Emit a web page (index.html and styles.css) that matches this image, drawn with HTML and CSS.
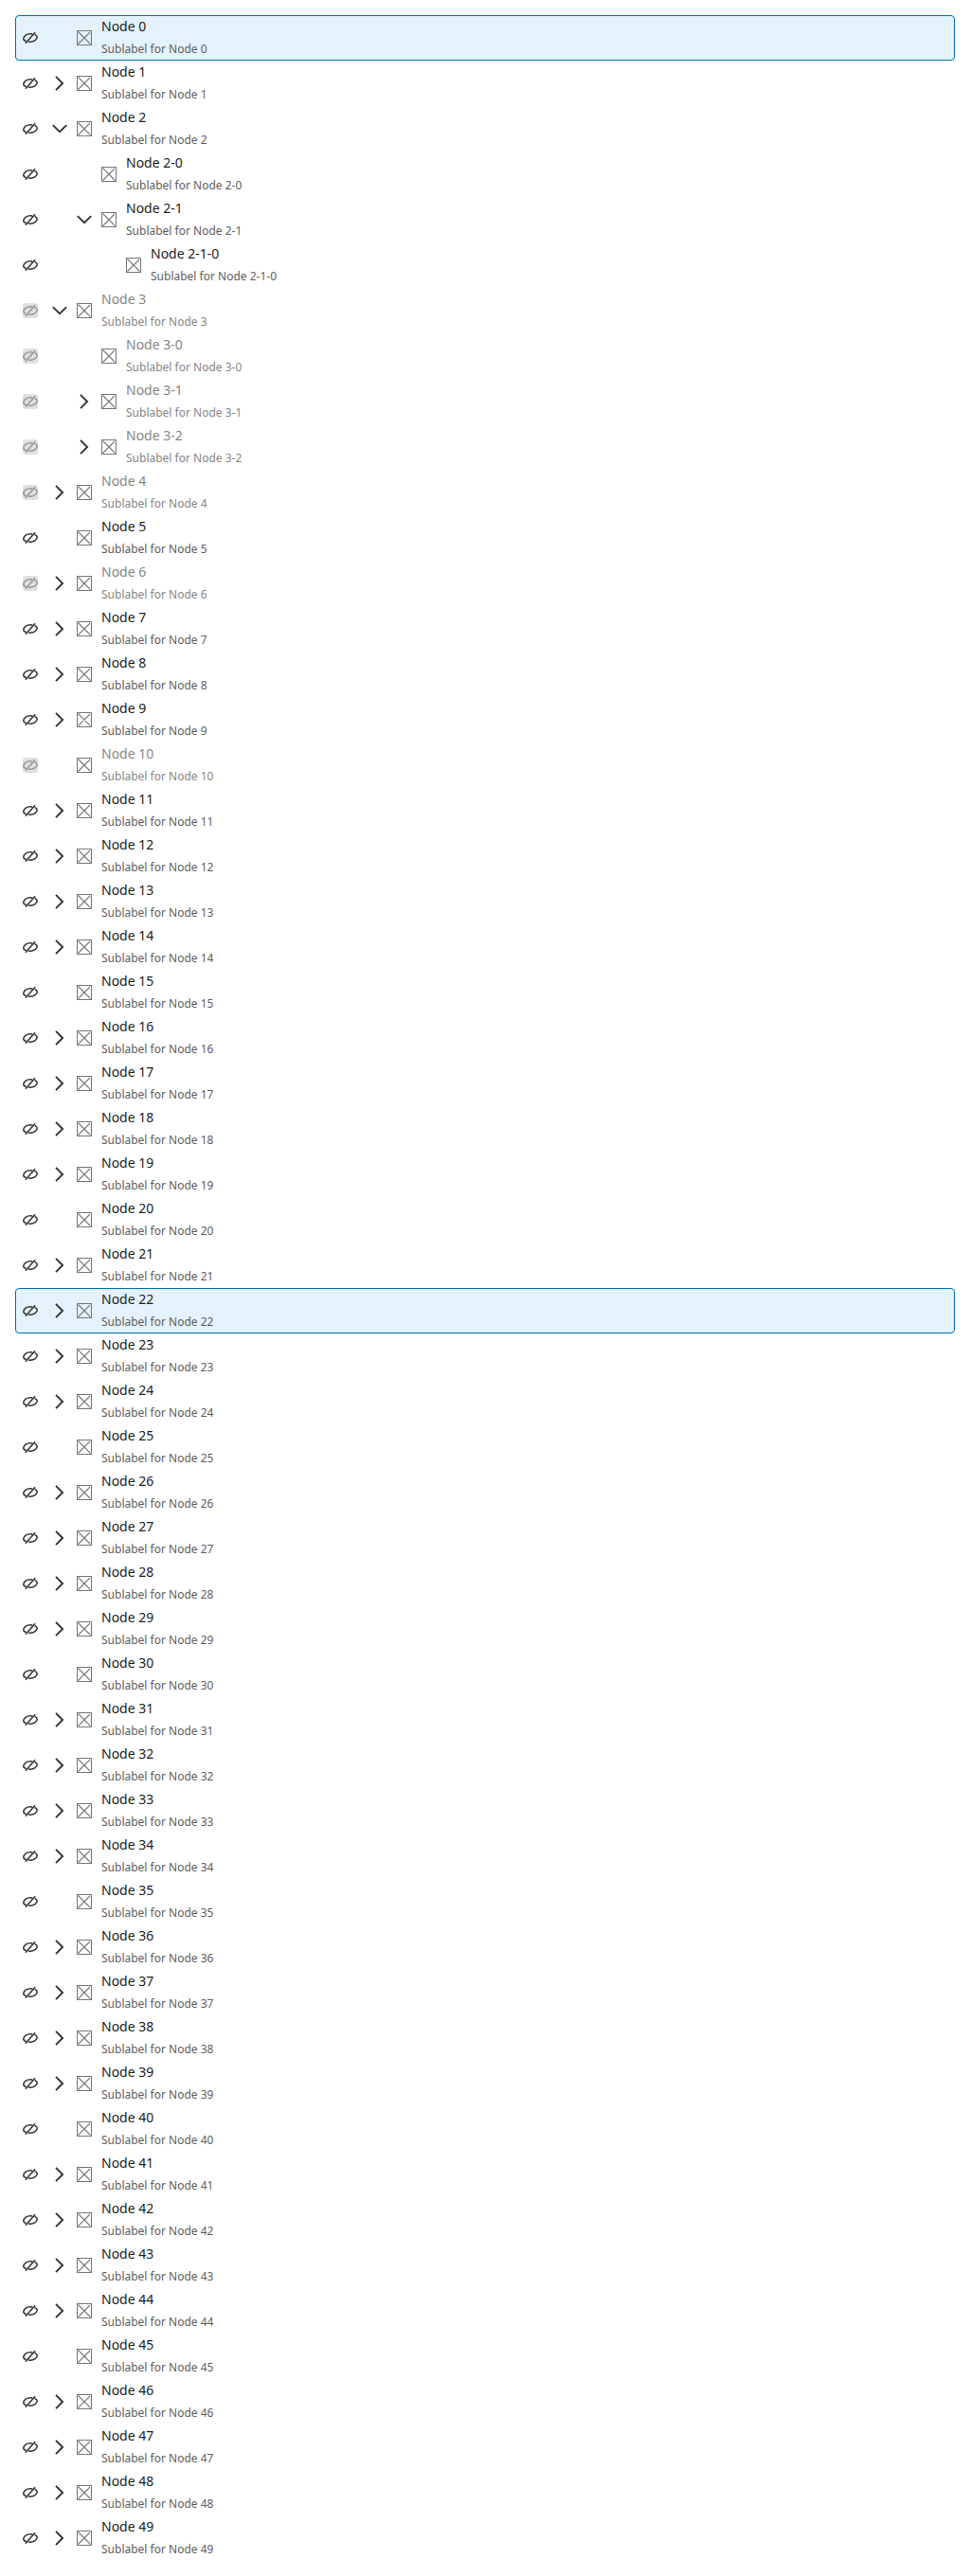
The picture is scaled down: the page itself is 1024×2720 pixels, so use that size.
FILE: index.html
```html
<!DOCTYPE html>
<html lang="en">
<head>
<meta charset="utf-8">
<title>Tree</title>
<link rel="stylesheet" href="styles.css">
</head>
<body>
<svg class="sprite" aria-hidden="true">
  <symbol id="eye-off" viewBox="0 0 16 16">
    <path d="M10.200 4C9.500 3.800 8.800 3.800 8 3.800 4 3.800.8 6.400.8 9c0 1.100.9 2 2.800 2.600M12.600 4.600C14.200 5.200 15.200 6.100 15.200 7.200c0 2.500-3.300 5-7.200 5-.7 0-1.300 0-1.900-.2M13.100 2.200 2.900 13.800" fill="none" stroke="currentColor" stroke-width="1.600"/>
  </symbol>
  <symbol id="chevron-right" viewBox="0 0 16 16">
    <path d="M4 .8 11.100 8 4 15.200" fill="none" stroke="currentColor" stroke-width="1.900"/>
  </symbol>
  <symbol id="chevron-down" viewBox="0 0 16 16">
    <path d="M.8 4.100 8 11.200l7.200-7.100" fill="none" stroke="currentColor" stroke-width="1.900"/>
  </symbol>
  <symbol id="box" viewBox="0 0 16 16">
    <path d="M.5.5h15v15H.5zM1.500 1.500l13 13M14.500 1.500l-13 13" fill="none" stroke="currentColor" stroke-width="1.100"/>
  </symbol>
</svg>
<div class="tree" id="tree" role="tree"></div>
<script src="tree.js"></script>
</body>
</html>
```
FILE: styles.css
```css
body {
  margin: 0;
  background: #fff;
  font-family: "Noto Sans", sans-serif;
  color: #222;
}

.sprite {
  display: none;
}

.tree {
  display: flex;
  flex-direction: column;
  padding: 16px;
}

.row {
  display: flex;
  align-items: center;
  box-sizing: border-box;
  height: 48px;
  padding-left: 7px;
  border: 1px solid transparent;
  border-radius: 4px;
}

.row.selected {
  background: #e4f2fb;
  border-color: #0073b7;
}

.icon {
  display: block;
  flex: none;
  width: 16px;
  height: 16px;
}

.visibility {
  flex: none;
  margin-right: 15px;
  border-radius: 3px;
  color: #393939;
}

.content {
  display: flex;
  align-items: center;
  gap: 10px;
}

.level-1 {
  padding-left: 26px;
}

.level-2 {
  padding-left: 52px;
}

.toggle {
  flex: none;
  width: 16px;
  height: 16px;
  color: #333;
}

.box {
  color: #777;
}

.label,
.sublabel {
  line-height: 24px;
  white-space: nowrap;
}

.label {
  font-size: 14px;
}

.sublabel {
  font-size: 12px;
  color: #5e5e5e;
}

.disabled .label,
.disabled .sublabel {
  color: #868686;
}

.disabled .visibility {
  background: #dee1e3;
  color: #999;
}
```
FILE: tree.js
```js
const expanded = {
  "2": ["2-0", "2-1"],
  "2-1": ["2-1-0"],
  "3": ["3-0", "3-1", "3-2"],
};
const collapsed = new Set(["3-1", "3-2"]);
const disabled = new Set(["3", "3-0", "3-1", "3-2", "4", "6", "10"]);
const selected = new Set(["0", "22"]);

for (let i = 1; i < 50; i++) {
  if (i % 5 !== 0 && !expanded[i]) collapsed.add(String(i));
}

const icon = (name, cls = "") => `<svg class="icon ${cls}"><use href="#${name}"/></svg>`;

function renderNode(id, level) {
  const state = (selected.has(id) ? " selected" : "") + (disabled.has(id) ? " disabled" : "");
  const toggle = expanded[id] ? icon("chevron-down") : collapsed.has(id) ? icon("chevron-right") : "";
  const row = `<div class="row${state}" role="treeitem">
    <span class="visibility">${icon("eye-off")}</span>
    <div class="content level-${level}">
      <span class="toggle">${toggle}</span>
      ${icon("box", "box")}
      <div class="text">
        <div class="label">Node ${id}</div>
        <div class="sublabel">Sublabel for Node ${id}</div>
      </div>
    </div>
  </div>`;
  return row + (expanded[id] || []).map((child) => renderNode(child, level + 1)).join("");
}

document.getElementById("tree").innerHTML =
  Array.from({ length: 50 }, (_, i) => renderNode(String(i), 0)).join("");
```
